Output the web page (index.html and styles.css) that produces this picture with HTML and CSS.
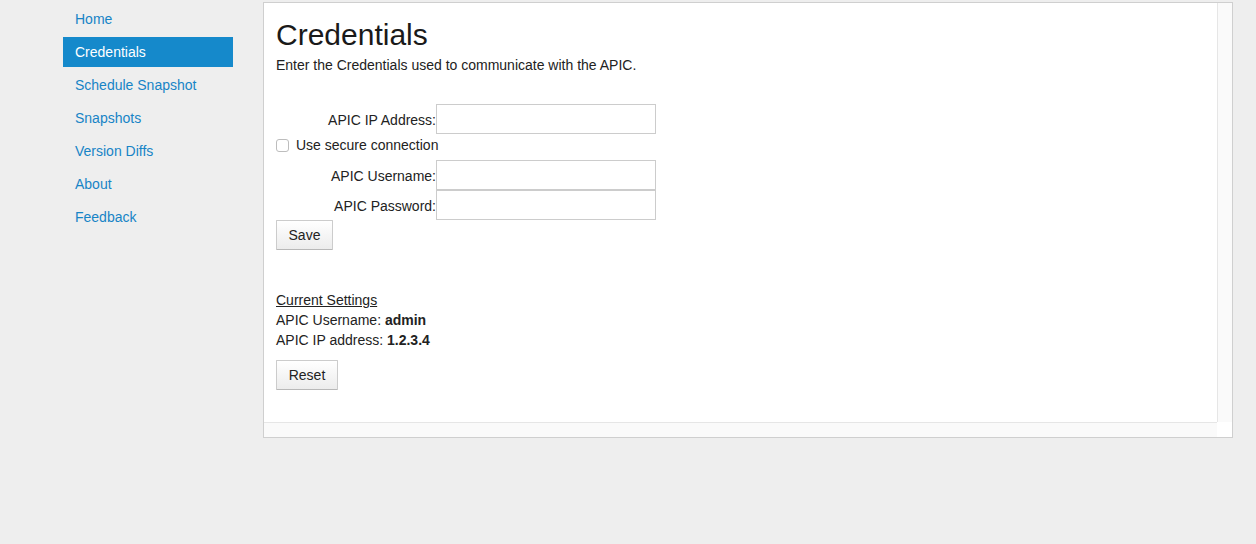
FILE: index.html
```html
<!DOCTYPE html>
<html>
<head>
<meta charset="utf-8">
<link rel="stylesheet" href="styles.css">
</head>
<body>
<div class="page">
  <nav class="sidebar">
    <a class="nav-item" href="#">Home</a>
    <a class="nav-item active" href="#">Credentials</a>
    <a class="nav-item" href="#">Schedule Snapshot</a>
    <a class="nav-item" href="#">Snapshots</a>
    <a class="nav-item" href="#">Version Diffs</a>
    <a class="nav-item" href="#">About</a>
    <a class="nav-item" href="#">Feedback</a>
  </nav>
  <div class="panel">
    <div class="content">
      <h1 class="title">Credentials</h1>
      <p class="subtitle">Enter the Credentials used to communicate with the APIC.</p>
      <form class="form">
        <div class="row">
          <label class="label">APIC IP Address:</label>
          <input class="field" type="text">
        </div>
        <label class="check-row"><span class="checkbox"></span>Use secure connection</label>
        <div class="row">
          <label class="label">APIC Username:</label>
          <input class="field" type="text">
        </div>
        <div class="row">
          <label class="label">APIC Password:</label>
          <input class="field" type="password">
        </div>
        <button class="btn save" type="button">Save</button>
      </form>
      <div class="current">
        <div class="line"><span class="underline">Current Settings</span></div>
        <div class="line">APIC Username: <b>admin</b></div>
        <div class="line">APIC IP address: <b>1.2.3.4</b></div>
        <button class="btn reset" type="button">Reset</button>
      </div>
    </div>
    <div class="vscroll"></div>
    <div class="hscroll"></div>
    <div class="corner"></div>
  </div>
</div>
</body>
</html>
```

FILE: styles.css
```css
html, body {
  margin: 0;
  padding: 0;
  background: #eeeeee;
  font-family: "Liberation Sans", Arial, sans-serif;
  font-size: 14px;
  color: #222;
}
.page {
  display: flex;
  align-items: flex-start;
}
.sidebar {
  margin-left: 63px;
  width: 170px;
  padding-top: 4px;
  display: flex;
  flex-direction: column;
  gap: 3px;
}
.nav-item {
  display: block;
  height: 30px;
  line-height: 30px;
  padding-left: 12px;
  color: #1784c6;
  text-decoration: none;
}
.nav-item.active {
  background: #1589cb;
  color: #fff;
}
.panel {
  margin-left: 30px;
  margin-top: 2px;
  width: 968px;
  height: 434px;
  border: 1px solid #cfcfcf;
  background: #fff;
  display: grid;
  grid-template-columns: 953px 15px;
  grid-template-rows: 419px 15px;
}
.content {
  padding: 0 12px;
  background: #fff;
  overflow: hidden;
}
.vscroll {
  background: #fafafa;
  border-left: 1px solid #e6e6e6;
}
.hscroll {
  background: #fafafa;
  border-top: 1px solid #e6e6e6;
}
.corner {
  background: #fff;
}
.title {
  margin: 15px 0 0;
  font-size: 30px;
  font-weight: normal;
  line-height: 34px;
  color: #1a1a1a;
}
.subtitle {
  margin: 3px 0 0;
  line-height: 20px;
}
.form {
  margin-top: 29px;
}
.row {
  display: flex;
  align-items: center;
  height: 30px;
}
.label {
  width: 160px;
  text-align: right;
  padding-top: 2px;
}
.field {
  box-sizing: border-box;
  width: 220px;
  height: 30px;
  margin: 0;
  border: 1px solid #cccccc;
  background: #fff;
  font: inherit;
}
.check-row {
  box-sizing: border-box;
  display: flex;
  align-items: center;
  height: 26px;
  padding-bottom: 4px;
  gap: 7px;
}
.checkbox {
  box-sizing: border-box;
  width: 13px;
  height: 13px;
  border: 1px solid #bdbdbd;
  border-radius: 3px;
  background: #fff;
}
.btn {
  box-sizing: border-box;
  height: 30px;
  margin: 0;
  padding: 0;
  border: 1px solid #cccccc;
  border-bottom-color: #b8b8b8;
  border-radius: 1px;
  background: linear-gradient(#ffffff, #ececec);
  font: inherit;
  color: #222;
  display: block;
}
.save {
  width: 57px;
}
.reset {
  width: 62px;
  margin-top: 10px;
}
.current {
  margin-top: 40px;
}
.line {
  line-height: 20px;
}
.underline {
  text-decoration: underline;
}
```
